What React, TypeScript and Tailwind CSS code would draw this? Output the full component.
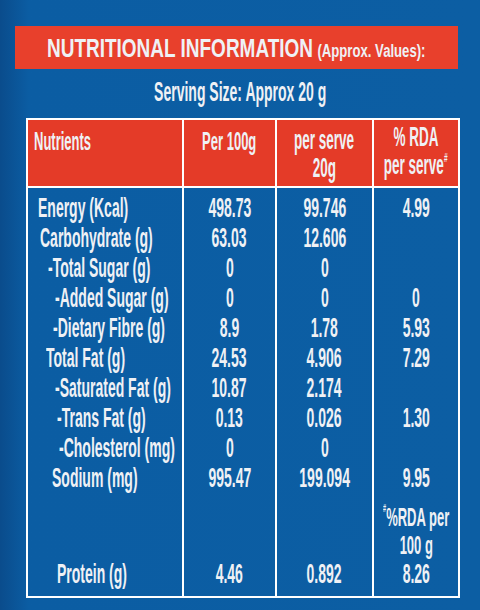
import type { ReactNode } from 'react';

const FONT = "font-['Liberation_Sans',Arial,sans-serif]";

type Row = { label: string; pad: string; per100: string; serve: string; rda: string };

const ROWS: Row[] = [
  { label: 'Energy (Kcal)', pad: 'pl-[10px]', per100: '498.73', serve: '99.746', rda: '4.99' },
  { label: 'Carbohydrate (g)', pad: 'pl-[12px]', per100: '63.03', serve: '12.606', rda: '' },
  { label: '-Total Sugar (g)', pad: 'pl-[20px]', per100: '0', serve: '0', rda: '' },
  { label: '-Added Sugar (g)', pad: 'pl-[27px]', per100: '0', serve: '0', rda: '0' },
  { label: '-Dietary Fibre (g)', pad: 'pl-[25px]', per100: '8.9', serve: '1.78', rda: '5.93' },
  { label: 'Total Fat (g)', pad: 'pl-[18px]', per100: '24.53', serve: '4.906', rda: '7.29' },
  { label: '-Saturated Fat (g)', pad: 'pl-[27px]', per100: '10.87', serve: '2.174', rda: '' },
  { label: '-Trans Fat (g)', pad: 'pl-[29px]', per100: '0.13', serve: '0.026', rda: '1.30' },
  { label: '-Cholesterol (mg)', pad: 'pl-[31px]', per100: '0', serve: '0', rda: '' },
  { label: 'Sodium (mg)', pad: 'pl-[24px]', per100: '995.47', serve: '199.094', rda: '9.95' },
];

// the label face is very condensed, so every run of text is squeezed horizontally
const Squeeze = ({ children, left }: { children: ReactNode; left?: boolean }) => (
  <span
    className={
      left
        ? 'inline-block origin-left scale-x-[0.5] whitespace-nowrap'
        : 'inline-block scale-x-[0.5] whitespace-nowrap'
    }
  >
    {children}
  </span>
);

const Spacer = ({ h }: { h: string }) => (
  <>
    <div className={h} />
    <div className={`${h} border-l-2 border-white`} />
    <div className={`${h} border-l-2 border-white`} />
    <div className={`${h} border-l-2 border-white`} />
  </>
);

const DataRow = ({ row }: { row: Row }) => (
  <>
    <div className={`flex h-[30px] ${row.pad}`}>
      <Squeeze left>{row.label}</Squeeze>
    </div>
    <div className="flex h-[30px] justify-center border-l-2 border-white">
      <Squeeze>{row.per100}</Squeeze>
    </div>
    <div className="flex h-[30px] justify-center border-l-2 border-white">
      <Squeeze>{row.serve}</Squeeze>
    </div>
    <div className="flex h-[30px] justify-center border-l-2 border-white">
      <Squeeze>{row.rda}</Squeeze>
    </div>
  </>
);

export default function App() {
  return (
    <div
      className={`h-[610px] w-[480px] overflow-hidden bg-linear-to-r from-[#0a4c8c] via-[#0b5da3] via-6% to-[#0c5ea3] pt-[26px] font-bold text-[#eff1f5] ${FONT}`}
    >
      <div className="ml-[15px] flex h-[43px] w-[443px] items-center justify-center bg-[#e8402c]">
        <div className="flex scale-x-[0.73] items-baseline gap-[6px] whitespace-nowrap">
          <span className="text-[26px] leading-none">NUTRITIONAL INFORMATION</span>
          <span className="text-[18px] leading-none">(Approx. Values):</span>
        </div>
      </div>

      <div className="mt-[8px] flex h-[30px] justify-center text-[28px] leading-[30px]">
        <span className="inline-block scale-x-[0.5] whitespace-nowrap">Serving Size: Approx 20 g</span>
      </div>

      <div className="mt-[11px] ml-[26px] grid w-[434px] grid-cols-[154px_93px_97px_86px] border-2 border-white">
        {/* header */}
        <div className="h-[68px] border-b-2 border-white bg-[#e43b28] pt-[7px] pl-[6px] text-[26px] leading-[28px]">
          <Squeeze left>Nutrients</Squeeze>
        </div>
        <div className="flex h-[68px] flex-col items-center border-b-2 border-l-2 border-white bg-[#e43b28] pt-[7px] text-[26px] leading-[28px]">
          <Squeeze>Per 100g</Squeeze>
        </div>
        <div className="flex h-[68px] flex-col items-center border-b-2 border-l-2 border-white bg-[#e43b28] pt-[6px] text-[27px] leading-[28px]">
          <Squeeze>per serve</Squeeze>
          <Squeeze>20g</Squeeze>
        </div>
        <div className="flex h-[68px] flex-col items-center border-b-2 border-l-2 border-white bg-[#e43b28] pt-[3px] text-[27px] leading-[28px]">
          <Squeeze>% RDA</Squeeze>
          <Squeeze>
            per serve<span className="align-top text-[13px] leading-none">#</span>
          </Squeeze>
        </div>

        {/* body */}
        <Spacer h="h-[5px]" />
        <div className="contents text-[28px] leading-[30px]">
          {ROWS.map((row) => (
            <DataRow key={row.label} row={row} />
          ))}
        </div>

        <div className="h-[66px]" />
        <div className="h-[66px] border-l-2 border-white" />
        <div className="h-[66px] border-l-2 border-white" />
        <div className="flex h-[66px] flex-col items-center border-l-2 border-white pt-[10px] text-[26px] leading-[28px]">
          <Squeeze>
            <span className="align-top text-[11px] leading-none">#</span>%RDA per
          </Squeeze>
          <Squeeze>100 g</Squeeze>
        </div>

        <div className="contents text-[28px] leading-[30px]">
          <DataRow row={{ label: 'Protein (g)', pad: 'pl-[29px]', per100: '4.46', serve: '0.892', rda: '8.26' }} />
        </div>
        <Spacer h="h-[7px]" />
      </div>
    </div>
  );
}
